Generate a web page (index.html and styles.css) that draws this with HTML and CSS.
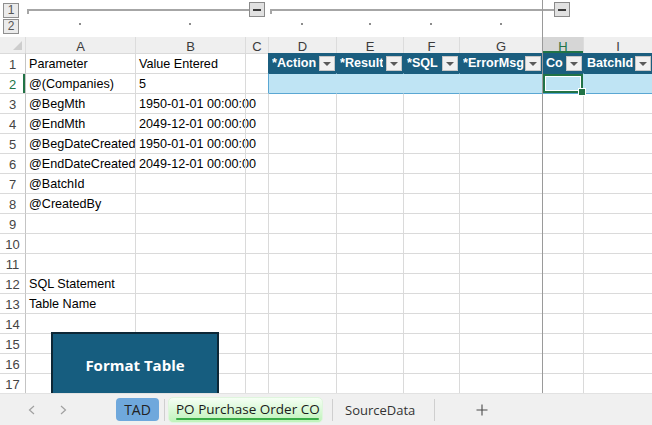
FILE: index.html
```html
<!DOCTYPE html>
<html lang="en">
<head>
    <meta charset="UTF-8">
    <title>PO Purchase Order CO</title>
    <link rel="stylesheet" href="styles.css">
</head>
<body>
    <div class="workbook">
        <div class="outline cols-grid">
            <div class="levels">
                <div class="level-btn">1</div>
                <div class="level-btn">2</div>
            </div>
            <div class="group group-ab">
                <div class="group-line"></div>
                <div class="collapse-btn"><span></span></div>
            </div>
            <div class="group group-dg">
                <div class="group-line"></div>
                <div class="collapse-btn"><span></span></div>
            </div>
            <div class="dot-cell"><i></i></div>
            <div class="dot-cell"><i></i></div>
            <div class="dot-cell"></div>
            <div class="dot-cell"><i></i></div>
            <div class="dot-cell"><i></i></div>
            <div class="dot-cell"><i></i></div>
            <div class="dot-cell"><i></i></div>
            <div class="dot-cell"></div>
            <div class="dot-cell"></div>
        </div>

        <div class="sheet cols-grid" id="sheet">
            <button class="format-btn">Format Table</button>
        </div>

        <div class="freeze-line"></div>

        <div class="tabbar">
            <div class="tab-nav">
                <svg width="7" height="10" viewBox="0 0 7 10"><polyline points="6,1 1.5,5 6,9" fill="none" stroke="#a0a0a0" stroke-width="1.2"/></svg>
                <svg width="7" height="10" viewBox="0 0 7 10"><polyline points="1,1 5.5,5 1,9" fill="none" stroke="#a0a0a0" stroke-width="1.2"/></svg>
            </div>
            <div class="tab tab-tad">TAD</div>
            <div class="tab-sep"></div>
            <div class="tab tab-active">PO Purchase Order CO</div>
            <div class="tab-sep sep-2"></div>
            <div class="tab tab-plain">SourceData</div>
            <div class="tab-sep"></div>
            <div class="tab-add">
                <svg width="12" height="12" viewBox="0 0 12 12"><path d="M6 0.5V11.5M0.5 6H11.5" stroke="#4a4a4a" stroke-width="1.1" fill="none"/></svg>
            </div>
        </div>
    </div>

    <script>
        const cols = ['A', 'B', 'C', 'D', 'E', 'F', 'G', 'H', 'I'];
        const values = {
            1: ['Parameter', 'Value Entered'],
            2: ['@(Companies)', '5'],
            3: ['@BegMth', '1950-01-01 00:00:00'],
            4: ['@EndMth', '2049-12-01 00:00:00'],
            5: ['@BegDateCreated', '1950-01-01 00:00:00'],
            6: ['@EndDateCreated', '2049-12-01 00:00:00'],
            7: ['@BatchId'],
            8: ['@CreatedBy'],
            12: ['SQL Statement'],
            13: ['Table Name']
        };
        const tableHead = ['*Action', '*Result', '*SQL', '*ErrorMsg', 'Co', 'BatchId'];
        const sheet = document.getElementById('sheet');

        function addCell(cls, text) {
            const div = document.createElement('div');
            div.className = cls;
            if (text) div.textContent = text;
            sheet.appendChild(div);
            return div;
        }

        // 列标题
        const corner = addCell('corner');
        corner.innerHTML = '<svg width="25" height="16" viewBox="0 0 25 16"><polygon points="22,4 22,13 13,13" fill="#cdcdcd"/></svg>';
        cols.forEach(c => addCell(c === 'H' ? 'colh active' : 'colh', c));

        for (let r = 1; r <= 17; r++) {
            addCell(r === 2 ? 'rh active' : 'rh', String(r));
            cols.forEach((c, i) => {
                const inTable = i >= 3;
                let cls = 'cell';
                if (i === 0) cls += ' first-col';

                if (r === 1 && inTable) {
                    const th = addCell(cls + ' th' + (i === 3 ? ' th-start' : ''));
                    th.innerHTML = '<span class="th-text">' + tableHead[i - 3] + '</span>' +
                        '<span class="dd"><svg width="8" height="4" viewBox="0 0 8 4"><polygon points="0,0 8,0 4,4" fill="#5a5a5a"/></svg></span>';
                    return;
                }
                if (r === 2 && inTable) {
                    cls += ' tb';
                    if (i === 3) cls += ' tb-start';
                    if (c === 'H') cls += ' sel';
                }
                if (r === 3 && inTable) cls += ' tb-below';

                const text = (values[r] || [])[i] || '';
                addCell(cls, text);
            });
        }
    </script>
</body>
</html>
```

FILE: styles.css
```css
* {
    margin: 0;
    padding: 0;
    box-sizing: border-box;
}

body {
    width: 652px;
    height: 425px;
    overflow: hidden;
    background: #fff;
    font-family: "Liberation Sans", Arial, sans-serif;
    font-size: 13px;
    color: #000;
}

.workbook {
    position: relative;
    height: 425px;
}

.cols-grid {
    display: grid;
    grid-template-columns: 25px 110px 110px 23px 68px 67px 56px 83px 41px 1fr;
}

/* 分组大纲 */
.outline {
    height: 37px;
    grid-template-rows: 18px 19px;
}

.levels {
    grid-row: 1 / 3;
    grid-column: 1;
    display: flex;
    flex-direction: column;
    gap: 1px;
    padding: 3px 0 0 3px;
}

.level-btn {
    width: 16px;
    height: 15px;
    border: 1px solid #8f8f8f;
    background: #ebebeb;
    color: #555;
    font-size: 12px;
    line-height: 13px;
    text-align: center;
}

.group {
    grid-row: 1;
    display: flex;
    align-items: center;
    padding: 1px 3px 0 2px;
}

.group-ab {
    grid-column: 2 / 5;
}

.group-dg {
    grid-column: 5 / 10;
    padding-right: 13px;
}

.group-line {
    flex: 1;
    height: 2px;
    background: #a6a6a6;
    position: relative;
}

.group-line::before {
    content: "";
    position: absolute;
    left: 0;
    top: 0;
    width: 2px;
    height: 5px;
    background: #a6a6a6;
}

.collapse-btn {
    width: 16px;
    height: 15px;
    border: 1px solid #8a8a8a;
    background: #e1e1e1;
    display: flex;
    align-items: center;
    justify-content: center;
}

.collapse-btn span {
    width: 8px;
    height: 2px;
    background: #3a3a3a;
}

.dot-cell {
    grid-row: 2;
    display: flex;
    justify-content: center;
    padding-top: 5px;
}

.dot-cell i {
    width: 2px;
    height: 2px;
    background: #8c8c8c;
}

/* 表格 */
.sheet {
    position: relative;
    height: 356px;
    overflow: hidden;
    grid-template-rows: 16px;
    grid-auto-rows: 20px;
}

.corner {
    background: #efefef;
    line-height: 0;
}

.colh {
    background: #efefef;
    border-left: 1px solid #dcdcdc;
    color: #3b3b3b;
    text-align: center;
    line-height: 17px;
    padding-top: 1px;
}

.colh.active {
    background: #d6d6d6;
    color: #217346;
    box-shadow: inset 0 -2px 0 #217346;
}

.rh {
    border-top: 1px solid #dadada;
    color: #444;
    text-align: center;
    line-height: 20px;
    padding-top: 1px;
}

.rh.active {
    color: #217346;
    box-shadow: inset -2px 0 0 #217346;
}

.cell {
    border-left: 1px solid #dadada;
    border-top: 1px solid #dadada;
    padding: 1px 3px 0;
    white-space: nowrap;
    line-height: 19px;
    font-size: 12.6px;
}

.cell.first-col {
    border-left-color: #c4c4c4;
}

.th {
    background: #1b5e7f;
    border-left-color: #1b5e7f;
    border-top-color: #1b5e7f;
    color: #fff;
    font-weight: bold;
    display: flex;
    align-items: center;
    justify-content: space-between;
    padding: 0 1px 0 3px;
    overflow: hidden;
}

.th-text {
    overflow: hidden;
    min-width: 0;
}

.dd {
    flex-shrink: 0;
    width: 16px;
    height: 15px;
    background: #f1f1f1;
    border: 1px solid #c6c6c6;
    display: flex;
    align-items: center;
    justify-content: center;
}

.tb {
    background: #bfe4f4;
    border-left-color: #bfe4f4;
    border-top-color: #1b5e7f;
}

.tb.tb-start {
    border-left-color: #5aa7d3;
}

.tb-below {
    border-top-color: #5aa7d3;
}

.sel {
    position: relative;
    box-shadow: inset 0 0 0 2px #217346, inset 0 0 0 3px #fff;
}

.sel::after {
    content: "";
    position: absolute;
    right: -3px;
    bottom: -3px;
    width: 6px;
    height: 6px;
    background: #217346;
    border: 1px solid #fff;
    z-index: 2;
}

.format-btn {
    position: absolute;
    left: 51px;
    top: 295px;
    width: 168px;
    height: 65px;
    background: #165d7f;
    border: 2px solid #0d2736;
    color: #fff;
    font-family: "Open Sans", sans-serif;
    font-weight: bold;
    font-size: 15px;
    z-index: 1;
}

.freeze-line {
    position: absolute;
    left: 542px;
    top: 0;
    width: 1px;
    height: 393px;
    background: #9a9a9a;
    z-index: 3;
}

/* 工作表标签 */
.tabbar {
    height: 32px;
    background: #f0f0f0;
    border-top: 1px solid #e2e2e2;
    display: flex;
    align-items: center;
    font-family: "Open Sans", sans-serif;
    font-size: 13.5px;
    color: #222;
}

.tab-nav {
    display: flex;
    gap: 25px;
    margin-left: 28px;
}

.tab-tad {
    margin-left: 49px;
    width: 43px;
    height: 23px;
    background: #6fa8dc;
    border-radius: 4px;
    text-align: center;
    line-height: 23px;
    font-size: 14px;
}

.tab-sep {
    width: 1px;
    height: 22px;
    background: #cfcfcf;
    margin-left: 5px;
}

.tab-active {
    position: relative;
    margin-left: 3px;
    width: 155px;
    height: 26px;
    padding: 0 0 0 7px;
    line-height: 22px;
    background: linear-gradient(#f5fff4, #bff3ba);
    border: 1px solid #dff5dd;
    border-radius: 5px;
    color: #1a1a1a;
    white-space: nowrap;
}

.tab-active::after {
    content: "";
    position: absolute;
    left: 7px;
    right: 3px;
    bottom: 2px;
    height: 2px;
    border-radius: 1px;
    background: #39ad48;
}

.sep-2 {
    margin-left: 9px;
}

.tab-plain {
    width: 96px;
    padding-left: 12px;
    font-size: 13px;
    color: #333;
}

.tab-add {
    margin-left: 41px;
    line-height: 0;
}
```
